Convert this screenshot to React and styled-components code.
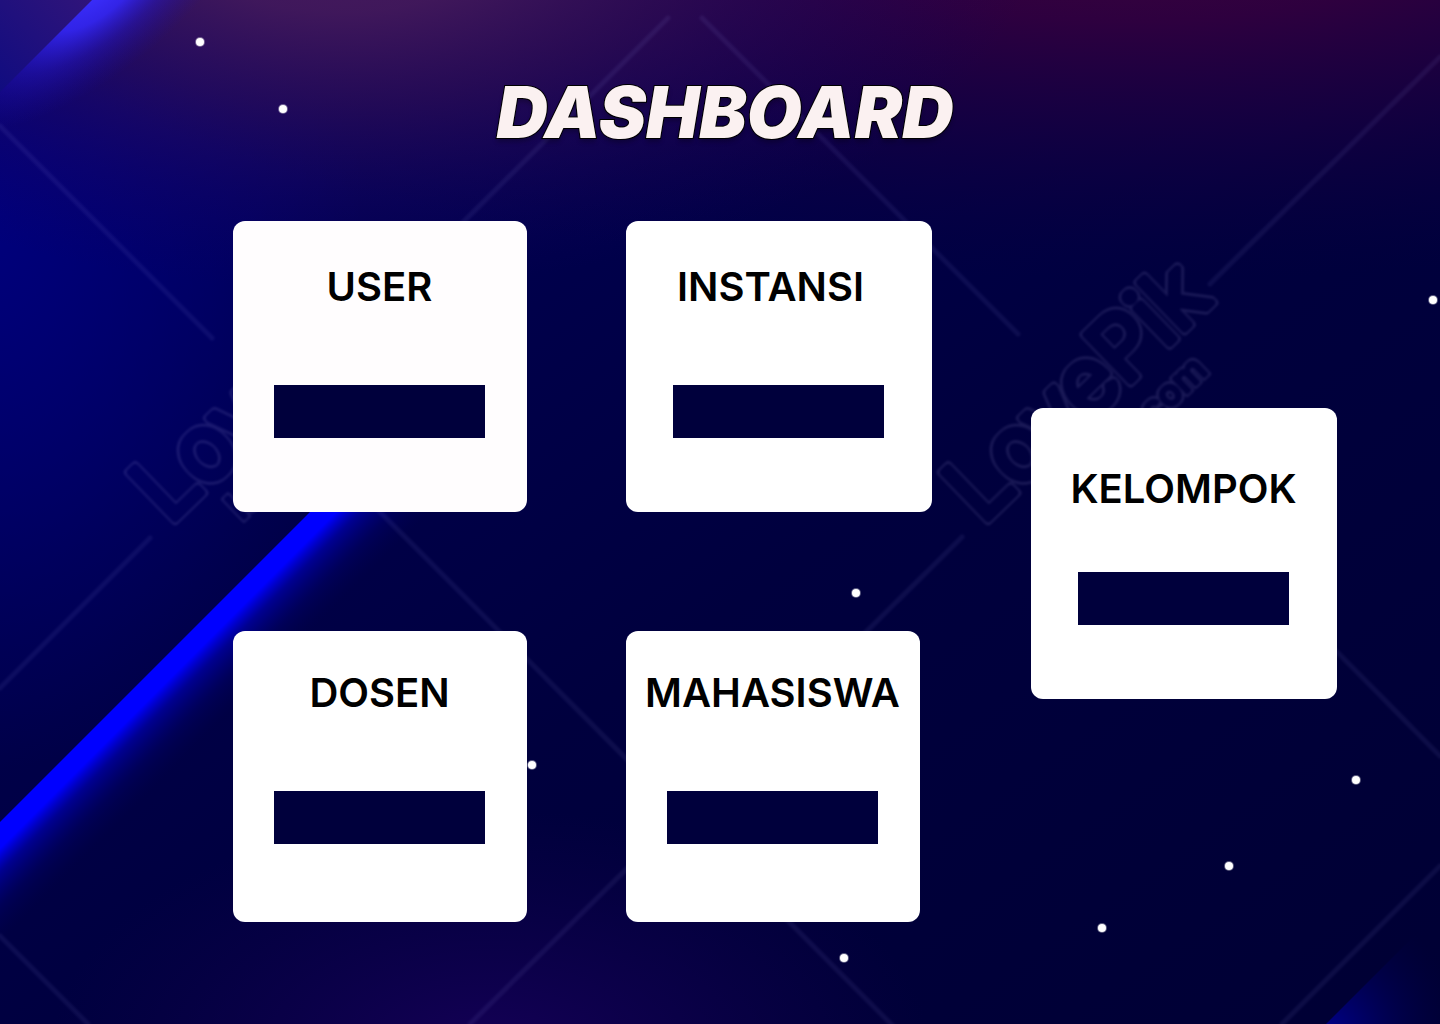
import React from "react";
import styled, { createGlobalStyle } from "styled-components";

const GlobalStyle = createGlobalStyle`
  *, *::before, *::after { box-sizing: border-box; }
  body {
    margin: 0;
    background: #00003b;
    font-family: Inter, "Liberation Sans", sans-serif;
  }
`;

const Page = styled.div`
  position: relative;
  min-height: 100vh;
  overflow: hidden;
`;

const Sky = styled.svg`
  position: absolute;
  inset: 0;
  width: 100%;
  height: 100%;
`;

const Content = styled.main`
  position: relative;
  padding: 70px 103px 102px 233px;
`;

const Header = styled.header`
  margin: 0 -103px 67px -223px;
`;

const Title = styled.h1`
  margin: 0;
  color: #fbf1f1;
  font-size: 71px;
  line-height: 84px;
  font-weight: 900;
  font-style: italic;
  text-align: center;
  -webkit-text-stroke: 2px #000;
  paint-order: stroke fill;
  text-shadow: 0 4px 4px rgba(0, 0, 0, 0.25);
`;

const Columns = styled.div`
  display: grid;
  grid-template-columns: 294fr 306fr 306fr;
  column-gap: 99px;
`;

const Column = styled.div`
  display: flex;
  flex-direction: column;
  gap: 119px;
  padding-top: ${(p) => p.$drop || 0}px;
`;

const Panel = styled.section`
  display: flex;
  flex-direction: column;
  align-items: center;
  gap: ${(p) => (p.$low ? 59 : 74)}px;
  min-height: 291px;
  margin-right: ${(p) => (p.$narrow ? 12 : 0)}px;
  padding: ${(p) => p.$top}px 1px 0 0;
  border-radius: 12px;
  background: ${(p) => p.$tint || "#fff"};
`;

const Label = styled.h2`
  margin: 0;
  padding-right: ${(p) => p.$inset || 0}px;
  color: #000;
  font-size: 40px;
  line-height: 48px;
  font-weight: 600;
`;

const Action = styled.button`
  width: 211px;
  max-width: 80%;
  height: 53px;
  padding: 0;
  border: 0;
  border-radius: 0;
  background: #00003c;
  cursor: pointer;
`;

const stars = [
  [200, 42], [283, 109], [1433, 300], [856, 593], [532, 765],
  [1356, 780], [1229, 866], [1102, 928], [844, 958],
];

const rays = [
  [0, 126, 212, 338], [370, 502, 895, 1028], [702, 18, 1018, 334],
  [1183, 496, 1440, 756], [668, 18, 340, 345], [150, 538, 0, 688],
  [1440, 57, 1210, 284], [962, 537, 470, 1024], [1440, 866, 1282, 1024],
  [0, 936, 88, 1024],
];

function Watermark({ x }) {
  return (
    <g
      transform={`translate(${x} 0) rotate(-44 172 520)`}
      fill="#fff"
      stroke="#fff"
      strokeLinejoin="round"
      strokeLinecap="round"
      fontFamily="Inter, sans-serif"
      opacity="0.13"
    >
      <text x="167" y="521" fontSize="88" fontWeight="300" strokeWidth="8" filter="url(#rim)">LovePik</text>
      <text x="222" y="569" fontSize="37" fontWeight="500" strokeWidth="3" filter="url(#rim)">lovepik.com</text>
    </g>
  );
}

function Backdrop() {
  return (
    <Sky viewBox="0 0 1440 1024" preserveAspectRatio="xMidYMid slice" aria-hidden="true">
      <defs>
        <linearGradient id="base" x1="0" y1="0" x2="1" y2="1">
          <stop offset="0" stopColor="#00006a" />
          <stop offset="0.3" stopColor="#00004c" />
          <stop offset="0.55" stopColor="#00003e" />
          <stop offset="1" stopColor="#000034" />
        </linearGradient>
        <radialGradient id="left" gradientUnits="userSpaceOnUse" cx="0" cy="0" r="1" gradientTransform="translate(-20 210) scale(380 560)">
          <stop offset="0" stopColor="#00007c" />
          <stop offset="1" stopColor="#00007c" stopOpacity="0" />
        </radialGradient>
        <radialGradient id="rose" gradientUnits="userSpaceOnUse" cx="0" cy="0" r="1" gradientTransform="translate(340 -80) scale(700 370)">
          <stop offset="0" stopColor="#4c1c5e" />
          <stop offset="0.25" stopColor="#451a5c" stopOpacity="0.9" />
          <stop offset="0.5" stopColor="#34105a" stopOpacity="0.62" />
          <stop offset="0.75" stopColor="#240860" stopOpacity="0.28" />
          <stop offset="1" stopColor="#140060" stopOpacity="0" />
        </radialGradient>
        <radialGradient id="plum" gradientUnits="userSpaceOnUse" cx="0" cy="0" r="1" gradientTransform="translate(1130 -90) scale(1200 370)">
          <stop offset="0" stopColor="#42063c" />
          <stop offset="0.3" stopColor="#34003e" stopOpacity="0.88" />
          <stop offset="0.6" stopColor="#1c0040" stopOpacity="0.65" />
          <stop offset="1" stopColor="#080040" stopOpacity="0" />
        </radialGradient>
        <radialGradient id="floor" gradientUnits="userSpaceOnUse" cx="0" cy="0" r="1" gradientTransform="translate(490 1050) scale(440 240)">
          <stop offset="0" stopColor="#140056" />
          <stop offset="1" stopColor="#10004c" stopOpacity="0" />
        </radialGradient>
        <linearGradient id="beam" gradientUnits="userSpaceOnUse" x1="0" y1="822" x2="60" y2="882">
          <stop offset="0" stopColor="#0000ff" />
          <stop offset="0.22" stopColor="#0000ff" />
          <stop offset="0.42" stopColor="#0000b8" stopOpacity="0.65" />
          <stop offset="0.7" stopColor="#000090" stopOpacity="0.25" />
          <stop offset="1" stopColor="#000060" stopOpacity="0" />
        </linearGradient>
        <radialGradient id="flare" gradientUnits="userSpaceOnUse" cx="0" cy="0" r="1" gradientTransform="translate(100 -12) rotate(140) scale(200 80)">
          <stop offset="0" stopColor="#3c30ff" />
          <stop offset="0.3" stopColor="#3428ff" stopOpacity="0.85" />
          <stop offset="0.6" stopColor="#2418e0" stopOpacity="0.4" />
          <stop offset="1" stopColor="#1408b0" stopOpacity="0" />
        </radialGradient>
        <linearGradient id="corner" x1="1" y1="0" x2="0" y2="1">
          <stop offset="0" stopColor="#30147a" />
          <stop offset="1" stopColor="#100c80" />
        </linearGradient>
        <radialGradient id="edge" gradientUnits="userSpaceOnUse" cx="1328" cy="1030" r="130">
          <stop offset="0" stopColor="#000088" />
          <stop offset="0.5" stopColor="#000058" stopOpacity="0.7" />
          <stop offset="1" stopColor="#000040" stopOpacity="0" />
        </radialGradient>
        <filter id="rim" x="-5%" y="-15%" width="110%" height="130%">
          <feMorphology in="SourceAlpha" operator="dilate" radius="2" result="wide" />
          <feComposite in="wide" in2="SourceAlpha" operator="out" result="ring" />
          <feFlood floodColor="#ccc4ff" />
          <feComposite in2="ring" operator="in" />
          <feGaussianBlur stdDeviation="0.8" />
        </filter>
        <filter id="soft"><feGaussianBlur stdDeviation="1" /></filter>
      </defs>
      <rect width="1440" height="1024" fill="url(#base)" />
      <rect width="1440" height="1024" fill="url(#left)" />
      <rect width="1440" height="1024" fill="url(#plum)" />
      <rect width="1440" height="1024" fill="url(#rose)" />
      <rect width="1440" height="1024" fill="url(#floor)" />
      <polygon points="0,0 92,0 0,92" fill="url(#corner)" />
      <polygon points="92,0 300,0 300,300 0,300 0,92" fill="url(#flare)" />
      <polygon points="0,822 380,442 500,442 500,500 0,1000" fill="url(#beam)" />
      <polygon points="1326,1024 1440,910 1440,1024" fill="url(#edge)" />
      <g stroke="#aaa0ff" strokeOpacity="0.08" strokeWidth="5" strokeLinecap="round" filter="url(#soft)">
        {rays.map(([x1, y1, x2, y2]) => (
          <line key={`${x1}-${y1}`} x1={x1} y1={y1} x2={x2} y2={y2} />
        ))}
      </g>
      <Watermark x={0} />
      <Watermark x={813} />
      <g fill="#fff">
        {stars.map(([cx, cy]) => (
          <g key={cx}>
            <circle cx={cx} cy={cy} r="5" opacity="0.35" />
            <circle cx={cx} cy={cy} r="4" />
          </g>
        ))}
      </g>
    </Sky>
  );
}

function Card({ name, inset, ...rest }) {
  return (
    <Panel {...rest}>
      <Label $inset={inset}>{name}</Label>
      <Action type="button" aria-label={name} />
    </Panel>
  );
}

export default function App() {
  return (
    <Page>
      <GlobalStyle />
      <Backdrop />
      <Content>
        <Header>
          <Title>DASHBOARD</Title>
        </Header>
        <Columns>
          <Column>
            <Card name="USER" $top={42} $tint="#fffdfe" />
            <Card name="DOSEN" $top={38} />
          </Column>
          <Column>
            <Card name="INSTANSI" $top={42} inset={16} />
            <Card name="MAHASISWA" $top={38} $narrow />
          </Column>
          <Column $drop={187}>
            <Card name="KELOMPOK" $top={57} $low />
          </Column>
        </Columns>
      </Content>
    </Page>
  );
}
